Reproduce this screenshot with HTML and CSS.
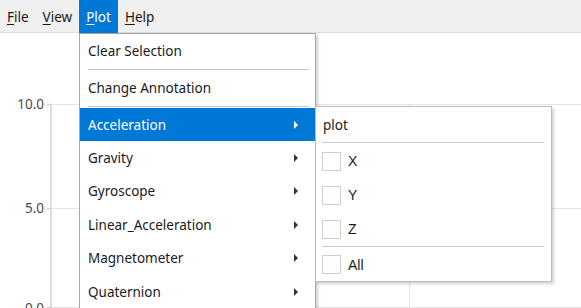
FILE: index.html
```html
<!DOCTYPE html>
<html lang="en">
<head>
    <meta charset="UTF-8">
    <title>Sensor Plot</title>
    <link rel="stylesheet" href="styles.css">
</head>
<body>
    <div class="window">
        <div class="menubar">
            <div class="menubar-item"><u>F</u>ile</div>
            <div class="menubar-item"><u>V</u>iew</div>
            <div class="menubar-item active"><u>P</u>lot</div>
            <div class="menubar-item"><u>H</u>elp</div>
        </div>

        <div class="plot">
            <svg class="chart" width="581" height="275" viewBox="0 0 581 275">
                <g stroke="#e4e4e4" stroke-width="1">
                    <line x1="51" y1="71.5" x2="581" y2="71.5"/>
                    <line x1="51" y1="175.5" x2="581" y2="175.5"/>
                    <line x1="51" y1="274.5" x2="581" y2="274.5"/>
                    <line x1="409.5" y1="71" x2="409.5" y2="275"/>
                </g>
                <g stroke="#d4d4d4" stroke-width="1.5">
                    <line x1="51" y1="71" x2="51" y2="275"/>
                    <line x1="47" y1="71.5" x2="51" y2="71.5"/>
                    <line x1="47" y1="175.5" x2="51" y2="175.5"/>
                    <line x1="47" y1="274.5" x2="51" y2="274.5"/>
                </g>
                <g class="tick-label" text-anchor="end">
                    <text x="44" y="76">10.0</text>
                    <text x="44" y="180">5.0</text>
                    <text x="44" y="280">0.0</text>
                </g>
            </svg>

            <div class="menu main-menu">
                <div class="menu-item tall">Clear Selection</div>
                <div class="separator"></div>
                <div class="menu-item tall">Change Annotation</div>
                <div class="separator"></div>
                <div class="menu-item sub selected">Acceleration<span class="arrow"></span></div>
                <div class="menu-item sub">Gravity<span class="arrow"></span></div>
                <div class="menu-item sub">Gyroscope<span class="arrow"></span></div>
                <div class="menu-item sub">Linear_Acceleration<span class="arrow"></span></div>
                <div class="menu-item sub">Magnetometer<span class="arrow"></span></div>
                <div class="menu-item sub">Quaternion<span class="arrow"></span></div>
            </div>

            <div class="menu sub-menu">
                <div class="menu-header">plot</div>
                <div class="separator"></div>
                <label class="check-item"><span class="box"></span>X</label>
                <label class="check-item"><span class="box"></span>Y</label>
                <label class="check-item"><span class="box"></span>Z</label>
                <div class="separator"></div>
                <label class="check-item"><span class="box"></span>All</label>
            </div>
        </div>
    </div>
</body>
</html>
```

FILE: styles.css
```css
body {
    margin: 0;
    width: 581px;
    height: 308px;
    overflow: hidden;
    background: #ffffff;
    font-family: "Noto Sans", "Open Sans", sans-serif;
    font-size: 13.5px;
    color: #1a1a1a;
}

.window {
    display: flex;
    flex-direction: column;
    height: 100%;
}

.menubar {
    display: flex;
    height: 32px;
    background: #f0f0f0;
    border-bottom: 1px solid #dcdcdc;
}

.menubar-item {
    display: flex;
    align-items: center;
    padding: 0 7px;
    height: 33px;
}

.menubar-item u {
    text-decoration-thickness: 1px;
    text-underline-offset: 2px;
}

.menubar-item.active {
    background: #0078d7;
    color: #ffffff;
}

.plot {
    position: relative;
    flex: 1;
}

.chart {
    display: block;
}

.tick-label {
    font-family: "Noto Sans", sans-serif;
    font-size: 13.5px;
    fill: #4a4a4a;
}

/* popup menus */
.menu {
    position: absolute;
    background: #ffffff;
    border: 1px solid #a8a8a8;
    box-shadow: 2px 2px 3px rgba(0, 0, 0, 0.18);
}

.main-menu {
    left: 79px;
    top: 0;
    width: 235px;
}

.menu-item {
    position: relative;
    display: flex;
    align-items: center;
    padding-left: 8px;
    height: 34px;
}

.menu-item.sub {
    height: 33.4px;
}

.menu-item.selected {
    background: #0078d7;
    color: #ffffff;
}

.arrow {
    position: absolute;
    left: 214px;
    top: 50%;
    margin-top: -4px;
    width: 0;
    height: 0;
    border-top: 4px solid transparent;
    border-bottom: 4px solid transparent;
    border-left: 4px solid #333333;
}

.selected .arrow {
    border-left-color: #ffffff;
}

.separator {
    height: 1px;
    margin: 1px 6px 1px 8px;
    background: #c8c8c8;
}

.sub-menu {
    left: 315px;
    top: 73px;
    width: 235px;
    padding-top: 1px;
    border-color: #bcbcbc;
}

.sub-menu .separator {
    margin: 0 7px 1px 6px;
}

.menu-header {
    display: flex;
    align-items: center;
    height: 34px;
    padding-left: 7px;
}

.check-item {
    display: flex;
    align-items: center;
    gap: 7px;
    height: 34px;
    padding-left: 6px;
    font-family: "Liberation Sans", Arial, sans-serif;
    font-size: 14px;
}

.check-item:last-child {
    height: 33px;
}

.box {
    width: 17px;
    height: 17px;
    border: 1px solid #cfcfcf;
    background: #ffffff;
}
```
